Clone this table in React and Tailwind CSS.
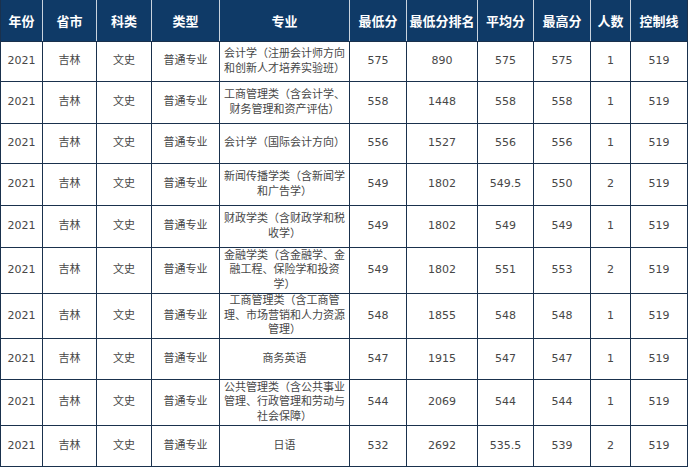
import React from "react";

const cols = [
  "w-[42px]",
  "w-[54px]",
  "w-[55px]",
  "w-[68px]",
  "w-[130px]",
  "w-[57px]",
  "w-[71px]",
  "w-[56px]",
  "w-[57px]",
  "w-[40px]",
  "w-[57px]",
];

const headers = ["年份", "省市", "科类", "类型", "专业", "最低分", "最低分排名", "平均分", "最高分", "人数", "控制线"];

const rows = [
  { h: "h-[40px]", m: ["会计学（注册会计师方向", "和创新人才培养实验班）"], v: ["575", "890", "575", "575", "1", "519"] },
  { h: "h-[42px]", m: ["工商管理类（含会计学、", "财务管理和资产评估）"], v: ["558", "1448", "558", "558", "1", "519"] },
  { h: "h-[40px]", m: ["会计学（国际会计方向）"], v: ["556", "1527", "556", "556", "1", "519"] },
  { h: "h-[42px]", m: ["新闻传播学类（含新闻学", "和广告学）"], v: ["549", "1802", "549.5", "550", "2", "519"] },
  { h: "h-[42px]", m: ["财政学类（含财政学和税", "收学）"], v: ["549", "1802", "549", "549", "1", "519"] },
  { h: "h-[46px]", m: ["金融学类（含金融学、金", "融工程、保险学和投资", "学）"], v: ["549", "1802", "551", "553", "2", "519"] },
  { h: "h-[45px]", m: ["工商管理类（含工商管", "理、市场营销和人力资源", "管理）"], v: ["548", "1855", "548", "548", "1", "519"] },
  { h: "h-[41px]", m: ["商务英语"], v: ["547", "1915", "547", "547", "1", "519"] },
  { h: "h-[46px]", m: ["公共管理类（含公共事业", "管理、行政管理和劳动与", "社会保障）"], v: ["544", "2069", "544", "544", "1", "519"] },
  { h: "h-[41px]", m: ["日语"], v: ["532", "2692", "535.5", "539", "2", "519"] },
];

export default function App() {
  return (
    <div className="bg-white w-[689px] h-[468px]">
      <div className="w-[688px] border-l border-[#1a314d] font-['DejaVu_Sans','Noto_Sans_CJK_SC',sans-serif]">
        <div className="flex h-[42px] bg-[#0f3a67] border-b border-[#1a314d]">
          {headers.map((t, i) => (
            <div
              key={i}
              className={`${cols[i]} flex items-center justify-center border-r ${i === headers.length - 1 ? "border-[#1a314d]" : "border-[#c9d3de]"} text-white text-[13px] font-bold whitespace-nowrap font-['Noto_Sans_CJK_SC',sans-serif]`}
            >
              {t}
            </div>
          ))}
        </div>
        {rows.map((r, ri) => {
          const cells = ["2021", "吉林", "文史", "普通专业", null, ...r.v];
          return (
            <div key={ri} className={`flex ${r.h} border-b border-[#1a314d] text-[#474747] text-[11px]`}>
              {cells.map((c, ci) => (
                <div
                  key={ci}
                  className={`${cols[ci]} flex flex-col items-center justify-center border-r border-[#1a314d] text-center leading-[14.5px] whitespace-nowrap`}
                >
                  {c === null ? r.m.map((l, li) => <div key={li}>{l}</div>) : c}
                </div>
              ))}
            </div>
          );
        })}
      </div>
    </div>
  );
}
